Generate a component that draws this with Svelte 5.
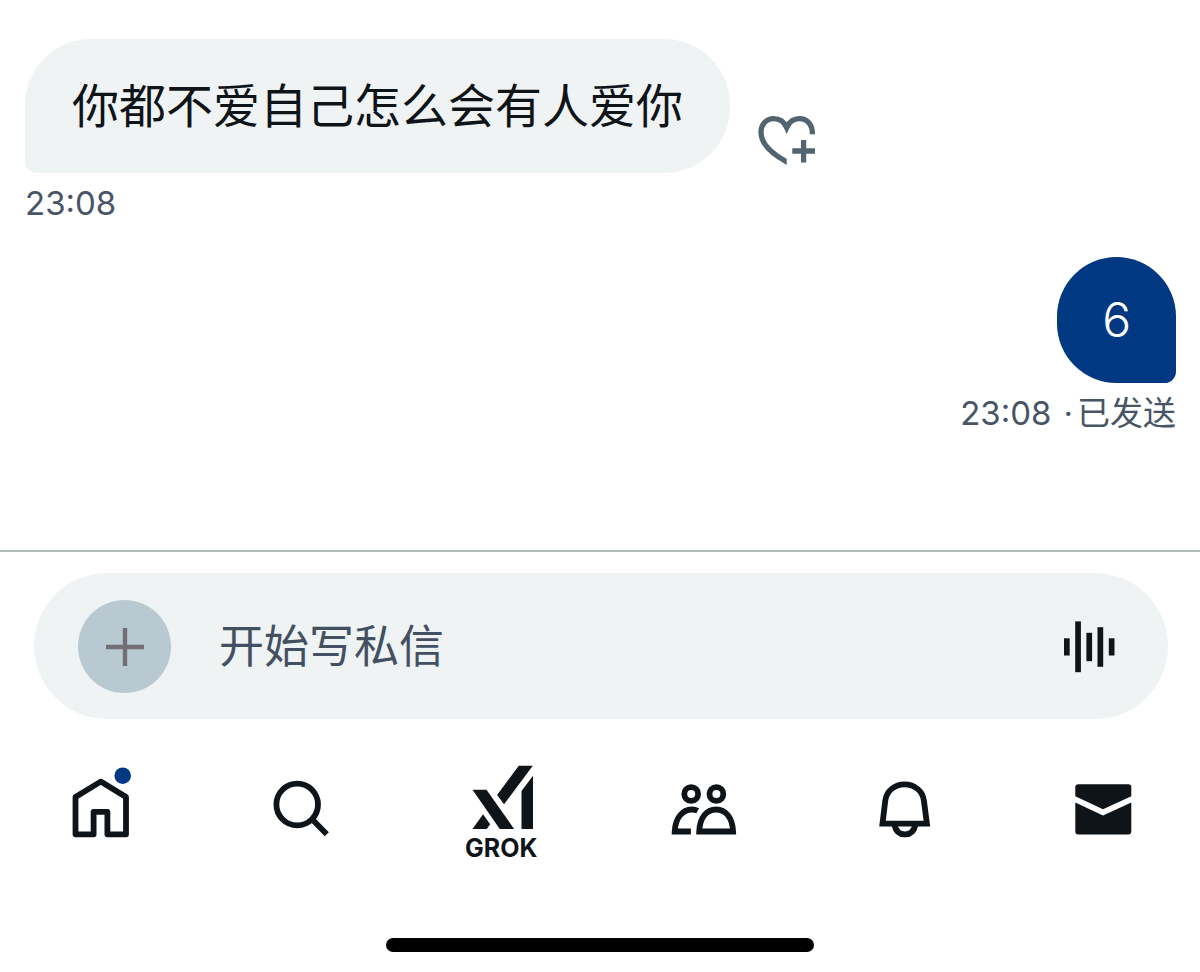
<script>
  let draft = $state('');
</script>

<main class="screen">
  <section class="thread" aria-label="对话">
    <article class="message received">
      <div class="row">
        <p class="bubble">你都不爱自己怎么会有人爱你</p>
        <button class="react" aria-label="添加回应">
          <svg width="60" height="56" viewBox="0 0 60 56" fill="none" stroke="currentColor" stroke-width="5.3">
            <clipPath id="heart-cut">
              <path d="M0 0H60V25H29.7V56H0Z" />
            </clipPath>
            <path clip-path="url(#heart-cut)" d="M55.4 21.3C55.6 11 49.8 5.7 42.6 5.7C37 5.7 32.4 8.6 29.7 14.6C27 8.6 22 5.7 16.6 5.7C9.2 5.7 4 11.4 4 19.2C4 30 13.5 40 29.7 48.8L35 51.6" />
            <path d="M35.3 38H58M46.6 27V49.4" />
          </svg>
        </button>
      </div>
      <p class="meta"><time>23:08</time></p>
    </article>

    <article class="message sent">
      <p class="bubble">6</p>
      <p class="meta"><time>23:08</time><span class="dot">·</span><span>已发送</span></p>
    </article>
  </section>

  <footer>
    <form class="composer" onsubmit={(event) => event.preventDefault()}>
      <button type="button" class="add" aria-label="添加附件">
        <svg width="38" height="38" viewBox="0 0 38 38" fill="none" stroke="currentColor" stroke-width="4.4">
          <path d="M0 19H38M19 0V38" />
        </svg>
      </button>
      <input type="text" aria-label="私信" placeholder="开始写私信" bind:value={draft} />
      <button type="button" class="voice" aria-label="语音消息">
        <svg width="52" height="52" viewBox="0 0 52 52" fill="currentColor">
          <rect x="0" y="17.3" width="5.7" height="17.2" />
          <rect x="11.2" y="0.4" width="5.7" height="50.8" />
          <rect x="22.4" y="11.8" width="5.7" height="28.4" />
          <rect x="33.5" y="6.2" width="5.7" height="39.6" />
          <rect x="44.8" y="17.3" width="5.7" height="17.2" />
        </svg>
      </button>
    </form>

    <nav class="tabs" aria-label="主导航">
      <button aria-label="主页">
        <svg viewBox="0 0 72 76" fill="none" stroke="currentColor" stroke-width="5.8" stroke-linejoin="round">
          <path d="M11.5 34L36.7 18.6L62 34V71.3H43.4V48.8H29.6V71.3H11.5Z" />
          <circle class="unread" cx="58.7" cy="12.7" r="8.3" />
        </svg>
      </button>
      <button aria-label="搜索">
        <svg viewBox="0 0 72 76" fill="none" stroke="currentColor" stroke-width="5.8">
          <circle cx="32.2" cy="41.5" r="20.8" />
          <path d="M46.8 56L61.8 71.2" />
        </svg>
      </button>
      <button>
        <svg viewBox="0 0 72 76" fill="currentColor" aria-hidden="true">
          <path d="M7.5 26.7H21.5L49.1 65.9H34.8Z" />
          <path d="M18.1 51.3L25.1 61.3L21.8 65.9H7.5Z" />
          <path d="M53.8 2.7H67.8L39.1 41.3L32.1 32Z" />
          <path d="M68 12.7V65.9H56.5V28Z" />
        </svg>
        <span class="label">GROK</span>
      </button>
      <button aria-label="社群">
        <svg viewBox="0 0 72 76" fill="none" stroke="currentColor" stroke-width="5.8">
          <circle cx="25.2" cy="31" r="6.9" />
          <circle cx="50.4" cy="31" r="6.9" />
          <path d="M33.2 68.5C33.7 54.5 40.6 46.5 50.1 46.5S66.5 54.5 67.1 68.5Z" />
          <path d="M24.9 68.5H8.7C9.3 54.5 16.8 46.5 25.8 46.5C28.2 46.5 30.2 47 31.7 47.8" />
        </svg>
      </button>
      <button aria-label="通知">
        <svg viewBox="0 0 72 76" fill="none" stroke="currentColor" stroke-width="5.8">
          <path d="M16.5 60.6L19.3 37.5C20.6 28 28.5 21.4 38.6 21.4S56.6 28 57.9 37.5L60.9 60.6Z" />
          <path d="M28.4 62C29.8 68.2 33.8 71.4 38.9 71.4S48 68.2 49.4 62" />
        </svg>
      </button>
      <button aria-label="私信" aria-current="page">
        <svg viewBox="0 0 72 76" fill="currentColor">
          <path d="M11.3 21.2H61.3A3 3 0 0 1 64.3 24.2V33.3L36 46.2L8.3 33.3V24.2A3 3 0 0 1 11.3 21.2Z" />
          <path d="M8.3 39.5L36 52.5L64.3 39.5V68.6A3 3 0 0 1 61.3 71.6H11.3A3 3 0 0 1 8.3 68.6Z" />
        </svg>
      </button>
    </nav>

    <div class="home-indicator"></div>
  </footer>
</main>

<style>
  :global(body) {
    margin: 0;
    background: #fff;
  }

  .screen {
    box-sizing: border-box;
    min-height: 100vh;
    display: flex;
    flex-direction: column;
    justify-content: space-between;
    color: #0f1419;
    font-family: Inter, "Noto Sans CJK SC", sans-serif;
  }

  p {
    margin: 0;
  }

  button {
    padding: 0;
    border: 0;
    background: none;
    color: inherit;
    font: inherit;
    cursor: pointer;
  }

  svg {
    display: block;
  }

  .thread {
    display: flex;
    flex-direction: column;
    gap: 32px;
    padding: 39px 24px 32px 25px;
  }

  .message {
    display: flex;
    flex-direction: column;
    align-items: flex-start;
    gap: 8px;
  }

  .row {
    display: flex;
    align-items: flex-end;
    gap: 27px;
  }

  .bubble {
    line-height: 70px;
  }

  .received .bubble {
    padding: 29px 47px 35px;
    border-radius: 66px 66px 66px 12px;
    background: #eff3f4;
    font-family: "Noto Sans CJK SC", sans-serif;
    font-size: 47px;
  }

  .react {
    margin-bottom: 4px;
    color: #536471;
  }

  .sent {
    align-items: flex-end;
  }

  .sent .bubble {
    padding: 28px 45px;
    border-radius: 62px 62px 12px 62px;
    background: #003882;
    color: #fff;
    font-size: 48px;
    font-weight: 300;
  }

  .meta {
    display: flex;
    color: #475566;
    font-size: 33px;
    line-height: 44px;
  }

  .dot {
    margin: 0 4px 0 12px;
  }

  footer {
    display: flex;
    flex-direction: column;
    border-top: 2px solid #b3babc;
  }

  .composer {
    display: flex;
    align-items: center;
    margin: 21px 32px 0 34px;
    padding: 27px 52px 26px 44px;
    border-radius: 73px;
    background: #eff3f4;
  }

  .add {
    display: grid;
    place-items: center;
    width: 93px;
    height: 93px;
    border-radius: 50%;
    background: #b9c9d1;
    color: #716e74;
  }

  input {
    flex: 1;
    min-width: 0;
    margin: 0 24px 0 48px;
    padding: 0 0 6px;
    border: 0;
    outline: 0;
    background: none;
    color: #0f1419;
    font-family: "Noto Sans CJK SC", sans-serif;
    font-size: 45px;
    line-height: 64px;
  }

  input::placeholder {
    color: #435061;
    opacity: 1;
  }

  .tabs {
    display: flex;
    align-items: flex-start;
    justify-content: space-between;
    padding: 44px 61px 0 64px;
  }

  .tabs button {
    display: flex;
    flex-direction: column;
    align-items: center;
    width: 72px;
  }

  .tabs svg {
    width: 72px;
    height: 76px;
  }

  .unread {
    fill: #003882;
    stroke: none;
  }

  .label {
    font-size: 25px;
    font-weight: 700;
    line-height: 18px;
  }

  .home-indicator {
    align-self: center;
    width: 36%;
    max-width: 428px;
    height: 14px;
    margin: 81px 0 20px;
    border-radius: 7px;
    background: #000;
  }
</style>
